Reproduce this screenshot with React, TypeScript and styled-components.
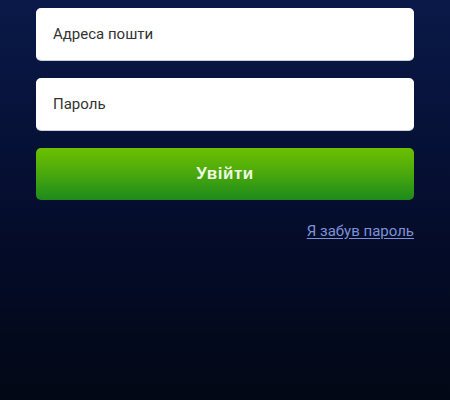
import React from "react";
import styled, { createGlobalStyle } from "styled-components";

const Global = createGlobalStyle`
  html, body { margin: 0; padding: 0; }
  body {
    width: 450px;
    height: 400px;
    overflow: hidden;
    background: linear-gradient(180deg, #0a1948 0%, #061137 35%, #040b27 65%, #020815 100%);
    font-family: Roboto, "Noto Sans", sans-serif;
  }
`;

const Page = styled.div`
  width: 450px;
  height: 400px;
  box-sizing: border-box;
  padding: 8px 36px 0 36px;
  display: flex;
  flex-direction: column;
`;

const Form = styled.form`
  display: flex;
  flex-direction: column;
  gap: 18px;
`;

const Field = styled.input`
  box-sizing: border-box;
  width: 100%;
  height: 52px;
  border: none;
  border-radius: 5px;
  background: #ffffff;
  padding: 0 17px;
  font-family: Roboto, "Noto Sans", sans-serif;
  font-size: 15px;
  color: #333;
  outline: none;
  box-shadow: 0 1px 0 #c9cfe0;
  &::placeholder { color: #333333; }
`;

const Submit = styled.button`
  width: 100%;
  height: 52px;
  border: none;
  border-radius: 5px;
  background: linear-gradient(180deg, #6cc000 0%, #4aa80d 50%, #1c8b1c 100%);
  color: #eef8e0;
  font-family: "Liberation Sans", Arial, sans-serif;
  font-weight: bold;
  font-size: 17px;
  letter-spacing: 0.5px;
  cursor: pointer;
`;

const LinkRow = styled.div`
  display: flex;
  justify-content: flex-end;
  margin-top: 19px;
`;

const Forgot = styled.a`
  color: #7c92d8;
  font-family: Roboto, "Noto Sans", sans-serif;
  font-size: 15px;
  text-decoration: underline;
  text-underline-offset: 2px;
  line-height: 24px;
`;

export default function App() {
  return (
    <>
      <Global />
      <Page>
        <Form onSubmit={(e) => e.preventDefault()}>
          <Field type="email" placeholder="Адреса пошти" />
          <Field type="password" placeholder="Пароль" />
          <Submit type="submit">Увійти</Submit>
        </Form>
        <LinkRow>
          <Forgot href="#">Я забув пароль</Forgot>
        </LinkRow>
      </Page>
    </>
  );
}
